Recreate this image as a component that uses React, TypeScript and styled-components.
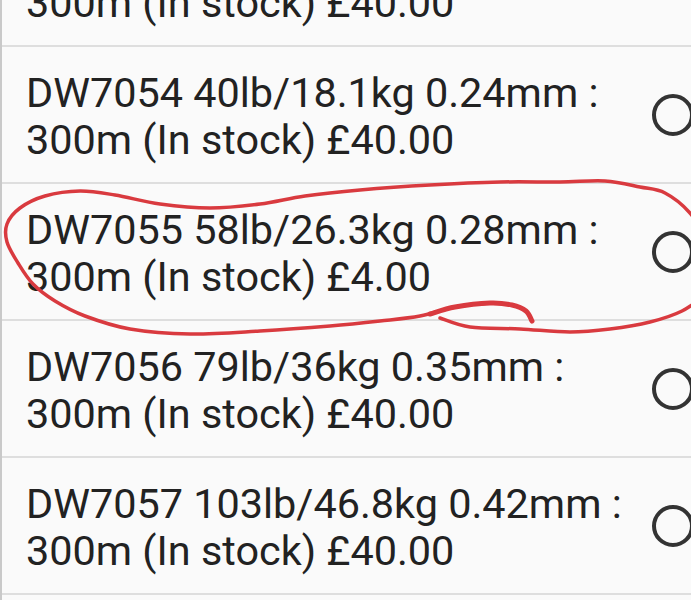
import styled, { createGlobalStyle } from 'styled-components';

const OPTIONS = [
  { code: 'DW7053', spec: '31lb/14.1kg 0.20mm', price: '£40.00' },
  { code: 'DW7054', spec: '40lb/18.1kg 0.24mm', price: '£40.00' },
  { code: 'DW7055', spec: '58lb/26.3kg 0.28mm', price: '£4.00' },
  { code: 'DW7056', spec: '79lb/36kg 0.35mm', price: '£40.00' },
  { code: 'DW7057', spec: '103lb/46.8kg 0.42mm', price: '£40.00' },
];

// hand-drawn marker loop round the DW7055 row
const LOOP: number[][] = [
  [532, 321], [526, 311], [512, 305], [490, 303], [455, 307], [420, 316],
  [380, 321], [330, 326], [260, 331], [190, 334], [130, 329], [85, 316],
  [55, 301], [33, 284], [18, 263], [7, 242], [7, 224], [20, 208],
  [45, 196], [80, 191], [115, 195], [160, 204], [210, 208], [260, 204],
  [305, 196], [360, 190], [430, 185], [500, 182], [560, 182], [605, 181],
  [640, 187], [665, 193], [690, 213], [715, 250],
];
const TAIL: number[][] = [
  [710, 292], [682, 311], [650, 322], [610, 329], [570, 332], [520, 329],
  [470, 327], [440, 318],
];
const HOOK: number[][] = [
  [430, 314], [455, 307], [490, 303], [512, 305], [526, 311], [532, 321],
];

const smooth = (pts: number[][]) => {
  let d = `M${pts[0][0]} ${pts[0][1]}`;
  for (let i = 0; i < pts.length - 1; i++) {
    const p0 = pts[i - 1] || pts[i];
    const p1 = pts[i];
    const p2 = pts[i + 1];
    const p3 = pts[i + 2] || p2;
    const c1 = [p1[0] + (p2[0] - p0[0]) / 6, p1[1] + (p2[1] - p0[1]) / 6];
    const c2 = [p2[0] - (p3[0] - p1[0]) / 6, p2[1] - (p3[1] - p1[1]) / 6];
    d += ` C${c1[0]} ${c1[1]} ${c2[0]} ${c2[1]} ${p2[0]} ${p2[1]}`;
  }
  return d;
};

const App = () => {
  return (
    <>
      <GlobalStyle />
      <Page>
        <List>
          {OPTIONS.map((o) => (
            <Row key={o.code}>
              <Label>
                {o.code} {o.spec} : 300m (In stock) {o.price}
              </Label>
              <Radio />
            </Row>
          ))}
        </List>
        <Marker viewBox="0 0 691 600" width="691" height="600">
          <path d={smooth(LOOP)} />
          <path d={smooth(TAIL)} />
          <path d={smooth(HOOK)} strokeWidth="5" />
        </Marker>
      </Page>
    </>
  );
};

export default App;

const GlobalStyle = createGlobalStyle`
  html, body {
    margin: 0;
    padding: 0;
    background: #fafafa;
    overflow: hidden;
  }
`;

const Page = styled.div`
  position: relative;

  width: 691px;
  height: 600px;

  overflow: hidden;

  background: #fafafa;
  border-left: 2px solid #c9c9c9;
  box-sizing: border-box;

  font-family: Roboto, 'Noto Sans', sans-serif;
  color: #222;
`;

const List = styled.div`
  display: flex;
  flex-direction: column;

  margin-top: -90px;
`;

const Row = styled.div`
  display: flex;
  align-items: center;

  height: 135px;
  gap: 22px;
  padding-left: 24px;

  border-bottom: 2px solid #dedede;
`;

const Label = styled.div`
  flex: 1;

  padding-top: 4px;

  font-size: 41.4px;
  line-height: 47px;
  font-weight: 400;
`;

const Radio = styled.div`
  flex-shrink: 0;

  width: 42px;
  height: 42px;
  margin-right: -3px;

  border: 4px solid #333;
  border-radius: 50%;
  box-sizing: border-box;
`;

const Marker = styled.svg`
  position: absolute;
  top: 0;
  left: -2px;

  pointer-events: none;

  fill: none;
  stroke: #d93a3f;
  stroke-width: 3.5;
  stroke-linecap: round;
  stroke-linejoin: round;
`;
